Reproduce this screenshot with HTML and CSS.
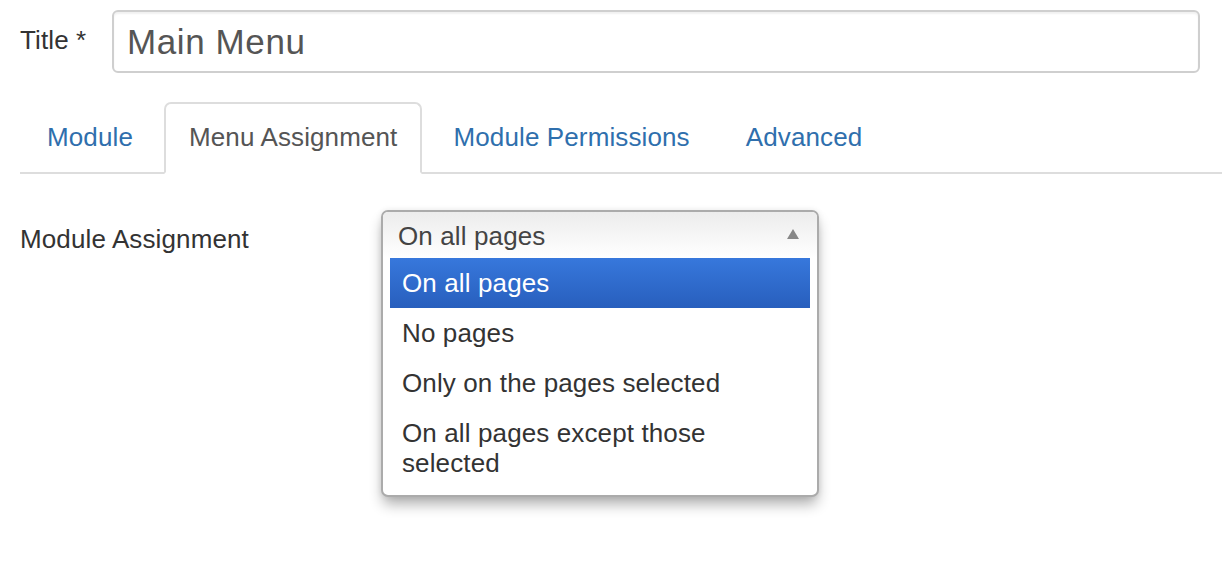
FILE: index.html
```html
<!DOCTYPE html>
<html>
<head>
<meta charset="utf-8">
<link rel="stylesheet" href="styles.css">
</head>
<body>
<div class="page">
  <div class="title-row">
    <label class="title-label">Title *</label>
    <input class="title-input" type="text" value="Main Menu">
  </div>

  <ul class="tabs">
    <li class="tab"><a>Module</a></li>
    <li class="tab active"><a>Menu Assignment</a></li>
    <li class="tab"><a>Module Permissions</a></li>
    <li class="tab"><a>Advanced</a></li>
  </ul>

  <div class="field-row">
    <div class="field-label">Module Assignment</div>
    <div class="select">
      <div class="select-head">
        <span>On all pages</span>
        <span class="arrow"></span>
      </div>
      <ul class="options">
        <li class="option selected">On all pages</li>
        <li class="option">No pages</li>
        <li class="option">Only on the pages selected</li>
        <li class="option">On all pages except those<br>selected</li>
      </ul>
    </div>
  </div>
</div>
</body>
</html>
```

FILE: styles.css
```css
* { box-sizing: border-box; }

html, body {
  margin: 0;
  padding: 0;
  background: #fff;
}

body {
  font-family: "Liberation Sans", Arial, Helvetica, sans-serif;
  font-size: 26px;
  line-height: 30px;
  letter-spacing: 0.12px;
  color: #333;
}

.page {
  padding-top: 10px;
  padding-bottom: 40px;
}

.title-row {
  display: flex;
  align-items: flex-start;
  padding-left: 20px;
}

.title-label {
  width: 92px;
  margin-top: 15px;
  color: #333;
}

.title-input {
  width: 1088px;
  height: 63px;
  border: 2px solid #cfcfcf;
  border-radius: 6px;
  box-shadow: inset 0 2px 2px rgba(0,0,0,0.06);
  padding: 1px 13px 0 13px;
  font-family: "Liberation Sans", Arial, Helvetica, sans-serif;
  font-size: 35px;
  letter-spacing: 0.6px;
  color: #555;
  outline: none;
  background: #fff;
}

.tabs {
  list-style: none;
  margin: 29px 0 0 20px;
  padding: 0 0 0 2px;
  display: flex;
  border-bottom: 2px solid #dddddd;
}

.tab {
  margin-right: 6px;
  margin-bottom: -2px;
}

.tab a {
  display: block;
  padding: 18px 23px 20px 23px;
  border: 2px solid transparent;
  border-radius: 7px 7px 0 0;
  color: #2f6fad;
}

.tab.active a {
  color: #555;
  border-color: #dddddd;
  border-bottom-color: #fff;
  background: #fff;
}

.field-row {
  display: flex;
  align-items: flex-start;
  margin-top: 36px;
  padding-left: 20px;
}

.field-label {
  width: 361px;
  margin-top: 14px;
  color: #333;
}

.select {
  width: 438px;
  border: 2px solid #ababab;
  border-radius: 7px;
  background: #fff;
  box-shadow: 0 9px 14px -2px rgba(0,0,0,0.32), 0 0 6px rgba(0,0,0,0.08);
}

.select-head {
  display: flex;
  justify-content: space-between;
  align-items: flex-start;
  padding: 9px 18px 7px 15px;
  border-radius: 5px 5px 0 0;
  background: linear-gradient(#ececec, #ffffff);
  color: #444;
}

.arrow {
  width: 0;
  height: 0;
  margin-top: 8px;
  border-left: 6px solid transparent;
  border-right: 6px solid transparent;
  border-bottom: 10px solid #888;
}

.options {
  list-style: none;
  margin: 0;
  padding: 0 7px 7px 7px;
}

.option {
  padding: 10px 12px;
  color: #333;
}

.option.selected {
  color: #fff;
  background: linear-gradient(#3778dc, #285fbd);
}
```
